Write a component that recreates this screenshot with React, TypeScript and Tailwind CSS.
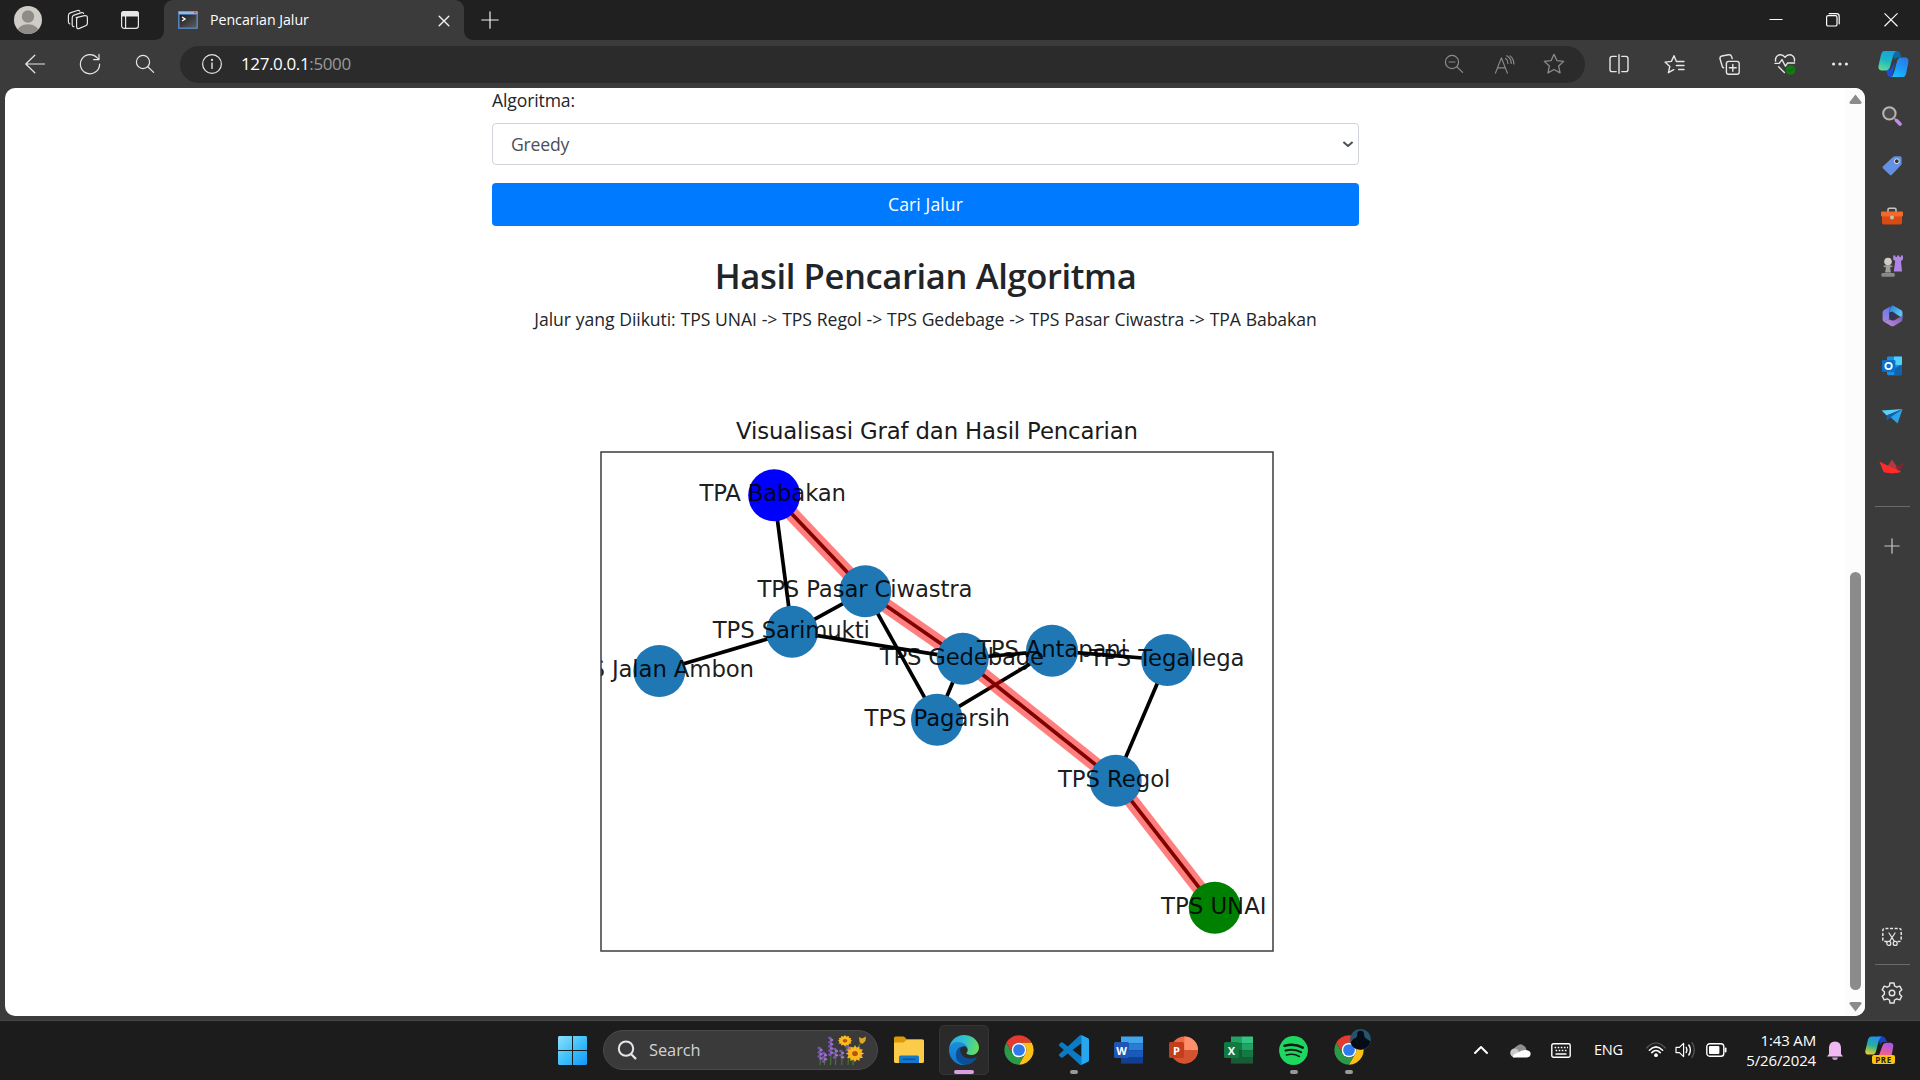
import React from "react";

type SvgProps = {
  w?: number;
  h?: number;
  vb?: string;
  className?: string;
  children: React.ReactNode;
};

/* Line icon: strokes follow the text colour. */
function Line({ w = 20, h, vb = "0 0 20 20", className = "", children }: SvgProps) {
  return (
    <svg
      width={w}
      height={h ?? w}
      viewBox={vb}
      fill="none"
      stroke="currentColor"
      strokeWidth={1.2}
      strokeLinecap="round"
      strokeLinejoin="round"
      className={`block shrink-0 ${className}`}
    >
      {children}
    </svg>
  );
}

/* Coloured artwork. */
function Art({ w = 30, h, vb = "0 0 48 48", className = "", children }: SvgProps) {
  return (
    <svg width={w} height={h ?? w} viewBox={vb} className={`block shrink-0 ${className}`}>
      {children}
    </svg>
  );
}

const starPath =
  "M10 1.2 L12.6 6.9 L18.8 7.6 L14.2 11.9 L15.5 18.1 L10 15 L4.5 18.1 L5.8 11.9 L1.2 7.6 L7.4 6.9 Z";

function TabStrip() {
  return (
    <div className="flex h-[40px] shrink-0 bg-[#202020] text-[#e6e6e6]">
      <div className="flex w-[164px] items-center bg-[#202020]">
        <Art w={28} vb="0 0 28 28" className="ml-[14px]">
          <defs>
            <clipPath id="avatarClip">
              <circle cx="14" cy="14" r="14" />
            </clipPath>
          </defs>
          <g clipPath="url(#avatarClip)">
            <rect width="28" height="28" fill="#cfccc8" />
            <circle cx="14" cy="10.5" r="6.2" fill="#8f8c88" />
            <ellipse cx="14" cy="26" rx="11" ry="7.8" fill="#8f8c88" />
          </g>
        </Art>
        <Line w={22} vb="0 0 22 22" className="ml-[25px]">
          <path d="M9.2 8.6 L17.6 6.6 Q20.4 6.2 20.4 8.8 V14.2 Q20.4 16 18.6 16.8 L12.4 19.4 Q9.8 20.4 9.6 17.6 V10.4 Q9.6 8.8 11 8.2" />
          <path d="M6.9 17.6 Q5.2 17.8 5.2 15.6 V8.8 Q5.2 6.8 7 6.1 L14.5 3.6 Q16 3.2 16.6 4.4" />
          <path d="M2.8 14.8 Q1.4 14.6 1.4 12.8 V6.8 Q1.4 4.6 3.2 3.9 L10.4 1.5 Q12 1.1 12.8 2.2" />
        </Line>
        <Line w={20} className="ml-[31px]">
          <rect x="1.6" y="1.6" width="16.8" height="16.8" rx="2.6" />
          <path d="M1.6 6 V4 Q1.6 1.6 4 1.6 H16 Q18.4 1.6 18.4 4 V6 Z" fill="currentColor" />
          <path d="M5.6 6 V18" />
        </Line>
      </div>
      <div className="relative flex w-[300px] items-center rounded-t-[9px] bg-[#3b3b3b]">
        <div className="absolute bottom-0 left-[-9px] h-[9px] w-[9px] bg-[#3b3b3b]">
          <div className="h-full w-full rounded-br-[9px] bg-[#202020]" />
        </div>
        <div className="absolute right-[-9px] bottom-0 h-[9px] w-[9px] bg-[#3b3b3b]">
          <div className="h-full w-full rounded-bl-[9px] bg-[#202020]" />
        </div>
        <Art w={20} h={18} vb="0 0 20 18" className="ml-[14px]">
          <defs>
            <linearGradient id="term" x1="0" y1="0" x2="1" y2="1">
              <stop offset="0" stopColor="#1d1d1d" />
              <stop offset="1" stopColor="#5c5c5c" />
            </linearGradient>
          </defs>
          <rect width="20" height="18" rx="0.8" fill="#5580b8" />
          <rect x="0.6" y="0.6" width="18.8" height="2.4" fill="#94b9e6" />
          <rect x="16" y="0.9" width="2.4" height="1.6" fill="#d9604c" />
          <rect x="1.6" y="3.8" width="16.8" height="12.6" fill="url(#term)" />
          <path d="M4 6 L7 8 L4 10" fill="none" stroke="#fff" strokeWidth="1.4" />
        </Art>
        <span className="ml-[12px] w-[228px] pb-[1px] font-['Open_Sans','Noto_Sans',sans-serif] text-[14.2px] tracking-[-0.03px] text-white">
          Pencarian Jalur
        </span>
        <Line w={12} vb="0 0 12 12" className="mt-[1px] text-[#f0f0f0]">
          <path d="M1.2 1.2 L10.8 10.8 M10.8 1.2 L1.2 10.8" strokeWidth="1.4" />
        </Line>
      </div>
      <div className="flex grow items-center pl-[17px]">
        <Line w={18} vb="0 0 18 18" className="text-[#f0f0f0]">
          <path d="M9 0.8 V17.2 M0.8 9 H17.2" />
        </Line>
      </div>
      <div className="flex w-[173px] items-center text-white">
        <div className="flex w-[57px] justify-center">
          <Line w={14} vb="0 0 14 14">
            <path d="M0.5 6.5 H13.5" strokeLinecap="butt" strokeWidth="1" />
          </Line>
        </div>
        <div className="flex w-[58px] justify-center">
          <Line w={14} vb="0 0 14 14">
            <rect x="0.6" y="2.6" width="10.4" height="10.4" rx="1.6" />
            <path d="M3.2 0.7 H10.6 Q13.2 0.7 13.2 3.4 V10.8" />
          </Line>
        </div>
        <div className="flex w-[58px] justify-center">
          <Line w={14} vb="0 0 14 14">
            <path d="M0.8 0.6 L13.2 13 M13.2 0.6 L0.8 13" strokeWidth="1.1" />
          </Line>
        </div>
      </div>
    </div>
  );
}

function CopilotMark() {
  return (
    <Art w={31} h={28} vb="0 0 31 28">
      <defs>
        <linearGradient id="cpA" x1="0.6" y1="0" x2="0.3" y2="1">
          <stop offset="0" stopColor="#16a3dd" />
          <stop offset="0.5" stopColor="#1fb6c2" />
          <stop offset="1" stopColor="#5fdc96" />
        </linearGradient>
        <linearGradient id="cpB" x1="0.7" y1="0" x2="0.2" y2="1">
          <stop offset="0" stopColor="#2a7be4" />
          <stop offset="0.6" stopColor="#1ba0fb" />
          <stop offset="1" stopColor="#18c2f4" />
        </linearGradient>
      </defs>
      <path d="M15 1 H19 Q21.4 1 22.4 4 L23.4 7.4 H20 Q17 7.4 16 10 Z" fill="#0f6aa3" />
      <path d="M8 20 H12 L17 12 L14 27 H12.8 Q10 27 9.2 24.4 Z" fill="#1c4fd6" />
      <path d="M6 1 H18.6 Q16.4 1.6 15.4 5 L12 17 Q11 20.4 7.6 20.4 H4 Q-0.4 20.2 0.6 15.6 L3 4.8 Q4 1 6 1Z" fill="url(#cpA)" />
      <path d="M25.2 27 H13 Q15 26.4 16 22.6 L19 11.4 Q20 7.6 23.4 7.6 H27 Q31.2 7.8 30.3 12.4 L28.2 23 Q27.4 27 25.2 27Z" fill="url(#cpB)" />
    </Art>
  );
}

function Toolbar() {
  return (
    <div className="flex h-[48px] shrink-0 items-center bg-[#3b3b3b] text-[#e6e6e6]">
      <div className="flex w-[180px] items-center pb-[1px] pl-[7px]">
        <div className="flex w-[55px] justify-center">
          <Line w={20}>
            <path d="M19.6 10 H0.8 M9.8 1.2 L0.8 10 L9.8 18.8" />
          </Line>
        </div>
        <div className="flex w-[55px] justify-center">
          <Line w={22} vb="0 0 22 22">
            <path d="M20.6 11.2 A9.6 9.6 0 1 1 18 4.6 L19.8 6.4 M20 1.4 V6.6 H14.6" />
          </Line>
        </div>
        <div className="flex w-[55px] justify-center">
          <Line w={20}>
            <circle cx="8" cy="8" r="6.6" />
            <path d="M12.8 12.8 L18.6 18.4" />
          </Line>
        </div>
      </div>
      <div className="flex h-[37px] w-[1405px] items-center rounded-full bg-[#2b2b2b]">
        <Line w={22} vb="0 0 22 22" className="ml-[21px]">
          <circle cx="11" cy="11" r="9.4" />
          <path d="M11 10 V15.4" strokeWidth="1.4" />
          <circle cx="11" cy="6.9" r="0.5" fill="currentColor" />
        </Line>
        <span className="ml-[18px] grow pb-[1px] font-['Open_Sans','Noto_Sans',sans-serif] text-[17px] tracking-[-0.38px] text-[#9a9a9a]">
          <span className="text-white">127.0.0.1</span>:5000
        </span>
        <div className="flex items-center pr-[6px] text-[#8b8b8b]">
          <div className="flex w-[50px] justify-center">
            <Line w={20}>
              <circle cx="8" cy="8" r="6.6" />
              <path d="M12.8 12.8 L18.6 18.4 M5 8 H11" />
            </Line>
          </div>
          <div className="flex w-[50px] justify-center">
            <Line w={21} vb="0 0 21 20">
              <path d="M1.4 18.6 L7.4 3.4 L13.4 18.6 M3.6 13.4 H11.2" />
              <path d="M11.6 4 Q14 5.6 14 9 M12.8 1.2 Q17.4 4 17.2 9 M16 1.4 Q20 4.6 19.8 9.4" />
            </Line>
          </div>
          <div className="flex w-[50px] justify-center">
            <Line w={22} vb="0 0 20 20">
              <path d={starPath} />
            </Line>
          </div>
        </div>
      </div>
      <div className="flex items-center pl-[6px]">
        <div className="flex w-[56px] justify-center">
          <Line w={20}>
            <path d="M7.2 2.4 H3.2 Q1 2.4 1 4.6 V15.4 Q1 17.6 3.2 17.6 H7.2 M12.8 2.4 H16.8 Q19 2.4 19 4.6 V15.4 Q19 17.6 16.8 17.6 H12.8 M10 0.8 V19.2" strokeWidth="1.4" />
          </Line>
        </div>
        <div className="flex w-[55px] justify-center">
          <Line w={21} vb="0 0 21 20">
            <path d="M13.2 7 H12.4 L10 1.2 L7.4 6.9 L1 7.6 L5.8 12 L4.4 18.2 L9.8 15.2 M13.2 7 H20 M12.4 11 H20 M14.6 15 H20" strokeWidth="1.4" />
          </Line>
        </div>
        <div className="flex w-[55px] justify-center">
          <Line w={21} vb="0 0 21 21">
            <rect x="7.4" y="7.4" width="12.8" height="12.8" rx="2.2" strokeWidth="1.4" />
            <path d="M13.8 10.4 V17.2 M10.4 13.8 H17.2" strokeWidth="1.4" />
            <path d="M4.6 13.8 Q3.6 13.6 3.2 12.2 L1 4.8 Q0.6 2.6 2.8 2 L9.6 0.8 Q11.8 0.4 12.6 2.6 L13.2 4.6" strokeWidth="1.4" />
          </Line>
        </div>
        <div className="flex w-[55px] justify-center">
          <Line w={22} vb="0 0 22 22">
            <path d="M1.6 8 Q0.8 4 4.6 2 Q8.4 0.8 11 4.2 Q13.6 0.8 17.4 2 Q21.2 4 20.4 8 M1 10.4 H5.2 L8 6.6 L11.4 13.2 L13.6 10 H20.6 M4.6 13.8 L10.4 19.4" strokeWidth="1.4" />
            <circle cx="16.6" cy="17" r="4.8" fill="#107c10" stroke="none" />
            <path d="M14.6 17 L16 18.4 L18.6 15.6" stroke="#2c4a2c" strokeWidth="1" />
          </Line>
        </div>
        <div className="flex w-[55px] justify-center">
          <Line w={18} vb="0 0 18 4">
            <g fill="currentColor" stroke="none">
              <circle cx="2.6" cy="2" r="1.6" />
              <circle cx="9" cy="2" r="1.6" />
              <circle cx="15.4" cy="2" r="1.6" />
            </g>
          </Line>
        </div>
        <div className="flex w-[53px] justify-center">
          <CopilotMark />
        </div>
      </div>
    </div>
  );
}

type Node = {
  label: string;
  x: number;
  y: number;
  from: number;
  to: number;
  color?: string;
};

const nodes: Record<string, Node> = {
  babakan: { label: "TPA Babakan", x: 774.2, y: 495.3, from: 699.5, to: 846, color: "#0000ff" },
  ciwastra: { label: "TPS Pasar Ciwastra", x: 865.3, y: 591.3, from: 757.5, to: 972.5 },
  sarimukti: { label: "TPS Sarimukti", x: 792, y: 631.7, from: 712.8, to: 869.8 },
  ambon: { label: "TPS Jalan Ambon", x: 659.3, y: 671, from: 563, to: 754 },
  gedebage: { label: "TPS Gedebage", x: 962.7, y: 658.7, from: 879.8, to: 1044 },
  pagarsih: { label: "TPS Pagarsih", x: 937, y: 719.7, from: 864.6, to: 1010 },
  antapani: { label: "TPS Antapani", x: 1052, y: 650.7, from: 977, to: 1127 },
  tegallega: { label: "TPS Tegallega", x: 1167.3, y: 660, from: 1089.5, to: 1244.5 },
  regol: { label: "TPS Regol", x: 1115.7, y: 780.7, from: 1058, to: 1170.4 },
  unai: { label: "TPS UNAI", x: 1214.7, y: 907.7, from: 1161, to: 1266.5, color: "#008000" },
};

const edges = [
  ["babakan", "sarimukti"],
  ["babakan", "ciwastra"],
  ["ciwastra", "sarimukti"],
  ["ciwastra", "pagarsih"],
  ["ciwastra", "gedebage"],
  ["sarimukti", "ambon"],
  ["sarimukti", "gedebage"],
  ["gedebage", "pagarsih"],
  ["gedebage", "antapani"],
  ["gedebage", "regol"],
  ["antapani", "pagarsih"],
  ["antapani", "tegallega"],
  ["tegallega", "regol"],
  ["regol", "unai"],
];

const route = ["babakan", "ciwastra", "gedebage", "regol", "unai"];

function Graph() {
  return (
    <svg width="700" height="560" viewBox="590 405 700 560" className="block font-['DejaVu_Sans',sans-serif] text-[22.8px]">
      <defs>
        <clipPath id="plotArea">
          <rect x="601" y="452" width="672" height="499" />
        </clipPath>
      </defs>
      <text x="736" y="439" textLength="402" fill="#1a1a1a">
        Visualisasi Graf dan Hasil Pencarian
      </text>
      <g stroke="#000" strokeWidth="3.7">
        {edges.map(([a, b]) => (
          <line key={a + b} x1={nodes[a].x} y1={nodes[a].y} x2={nodes[b].x} y2={nodes[b].y} />
        ))}
      </g>
      <g stroke="#ff0000" strokeOpacity="0.5" strokeWidth="14.5">
        {route.slice(1).map((b, i) => {
          const a = route[i];
          return <line key={b} x1={nodes[a].x} y1={nodes[a].y} x2={nodes[b].x} y2={nodes[b].y} />;
        })}
      </g>
      {Object.values(nodes).map((n) => (
        <circle key={n.label} cx={n.x} cy={n.y} r="26" fill={n.color ?? "#1f77b4"} />
      ))}
      <g clipPath="url(#plotArea)" fill="#000" fillOpacity="0.9">
        {Object.values(nodes).map((n) => (
          <text key={n.label} x={n.from} y={n.y + 5.8} textLength={n.to - n.from}>
            {n.label}
          </text>
        ))}
      </g>
      <rect x="601" y="452" width="672" height="499" fill="none" stroke="#3c3c3c" strokeWidth="1.5" />
    </svg>
  );
}

function Page() {
  return (
    <main className="flex h-[928px] w-[1860px] overflow-hidden rounded-[10px] bg-white font-['Open_Sans','Noto_Sans',sans-serif] text-[#212529]">
      <div className="flex grow flex-col items-center">
        <div className="flex w-[867px] flex-col">
          <label className="h-[35px] text-[17.6px] leading-[25px] tracking-[-0.14px]">Algoritma:</label>
          <div className="flex h-[42px] items-center justify-between rounded-[4px] border border-[#ced4da] bg-white pr-[4px] pl-[18px] text-[17.6px] tracking-[-0.2px] text-[#495057]">
            <span>Greedy</span>
            <Line w={12} vb="0 0 12 12">
              <path d="M1.4 4 L6 8 L10.6 4" strokeWidth="2" strokeLinecap="butt" />
            </Line>
          </div>
          <button className="mt-[18px] h-[43px] rounded-[4px] bg-[#007bff] text-[17.6px] tracking-[0.1px] text-white">
            Cari Jalur
          </button>
          <h2 className="mt-[29px] text-center text-[34.6px] leading-[42px] font-semibold tracking-[-0.38px] whitespace-nowrap">
            Hasil Pencarian Algoritma
          </h2>
          <p className="mt-[9px] text-center text-[17.6px] leading-[26px] tracking-[-0.08px] [word-spacing:0.4px] whitespace-nowrap">
            Jalur yang Diikuti: TPS UNAI -&gt; TPS Regol -&gt; TPS Gedebage -&gt; TPS Pasar Ciwastra -&gt; TPA Babakan
          </p>
        </div>
        <div className="mt-[73px] ml-[29px]">
          <Graph />
        </div>
      </div>
      <div className="flex w-[19px] shrink-0 flex-col items-center bg-[#fcfcfc] pt-[6px]">
        <Art w={13} h={11} vb="0 0 13 11">
          <path d="M6.5 0.6 L12.6 8.2 Q12.8 10 11 10 H2 Q0.2 10 0.4 8.2 Z" fill="#8b8b8b" />
        </Art>
        <div className="mt-[467px] h-[418px] w-[11px] rounded-full bg-[#8b8b8b]" />
        <Art w={13} h={11} vb="0 0 13 11" className="mt-[11px]">
          <path d="M6.5 10.4 L12.6 2.8 Q12.8 1 11 1 H2 Q0.2 1 0.4 2.8 Z" fill="#8b8b8b" />
        </Art>
      </div>
    </main>
  );
}

function Cell({ children }: { children: React.ReactNode }) {
  return <div className="flex h-[50px] w-full items-center justify-center">{children}</div>;
}

function Sidebar() {
  return (
    <aside className="flex w-[55px] flex-col items-center bg-[#3b3b3b] pt-[3px] pr-[1px] text-[#e6e6e6]">
      <Cell>
        <Art w={20} vb="0 0 20 20">
          <circle cx="7.4" cy="7.4" r="6.2" fill="#4a4a4a" stroke="#b9b5b1" strokeWidth="2" />
          <path d="M12 12 L14 14" stroke="#8f8b88" strokeWidth="2" />
          <path d="M14.6 14.6 L18 18" stroke="#c48be6" strokeWidth="3.6" strokeLinecap="round" />
        </Art>
      </Cell>
      <Cell>
        <Art w={20} vb="0 0 20 20">
          <path d="M11 1 Q12 0.2 13.4 0.2 H18 Q19.6 0.2 19.6 2 V7.4 Q19.6 8.6 18.6 9.6 L9.6 19 Q8.8 19.8 8 19 L0.8 12.2 Q0 11.4 0.8 10.6 Z" fill="#6390e4" />
          <circle cx="14.8" cy="5.2" r="2.4" fill="#333" stroke="#e3e7ee" strokeWidth="1" />
        </Art>
      </Cell>
      <Cell>
        <Art w={22} h={18} vb="0 0 22 18">
          <path d="M7 5 V2.4 Q7 1.2 8.2 1.2 H13.8 Q15 1.2 15 2.4 V5" fill="none" stroke="#c9c4c0" strokeWidth="1.5" />
          <rect x="1" y="6" width="20" height="11.4" rx="1.4" fill="#d94b10" />
          <rect x="0" y="4.6" width="22" height="5" rx="1" fill="#f2692b" />
          <circle cx="11" cy="10.4" r="2" fill="#c5bfba" />
        </Art>
      </Cell>
      <Cell>
        <Art w={22} vb="0 0 22 22">
          <path d="M12.2 0.4 H14.4 V2 H16 V0.4 H18.4 V2 H20 V0.4 H22 V4.4 L20 6 L21 16.4 H12.8 L14.2 6 L12.2 4.4Z" fill="#b184e8" />
          <circle cx="7" cy="6.6" r="3.8" fill="#cfcbc7" />
          <path d="M2 11 Q7 9 12 11 Q11 12.4 9 12.6 L10 17.4 H4 L5 12.6 Q3 12.4 2 11Z" fill="#a19d9a" />
          <rect x="0.4" y="18" width="13.4" height="3.8" rx="1.4" fill="#8b8784" />
        </Art>
      </Cell>
      <Cell>
        <Art w={21} h={22} vb="0 0 21 22">
          <defs>
            <linearGradient id="mA" x1="0" y1="0" x2="1" y2="0.6">
              <stop offset="0" stopColor="#2b78d8" />
              <stop offset="1" stopColor="#5ccdf5" />
            </linearGradient>
            <linearGradient id="mB" x1="0.5" y1="0" x2="0.3" y2="1">
              <stop offset="0" stopColor="#5b7be8" />
              <stop offset="1" stopColor="#a184e0" />
            </linearGradient>
            <linearGradient id="mC" x1="0" y1="0.6" x2="1" y2="0">
              <stop offset="0" stopColor="#b98bd8" />
              <stop offset="1" stopColor="#7a58c4" />
            </linearGradient>
          </defs>
          <path d="M10.5 0.2 L19.4 5.2 Q20.4 6 20.4 7.4 V13 L13.6 8.8 L7.4 7.4 V4 Z" fill="url(#mA)" />
          <path d="M10.5 0.2 L1.6 5.2 Q0.6 6 0.6 7.4 V14.6 Q0.6 15.8 1.6 16.6 L7.2 14.2 V5.6 Q7.2 2.2 10.5 0.2Z" fill="url(#mB)" />
          <path d="M1.6 16.6 L9 20.9 Q10.5 21.8 12 20.9 L19.4 16.6 Q20.4 15.8 20.4 14.6 V10.6 L13 15 Q10 16.4 7.2 14.2Z" fill="url(#mC)" />
          <path d="M7.4 7.6 L10.5 6.4 L13.8 9 V13.2 L10.5 15 L7.4 13.8Z" fill="#34344c" />
        </Art>
      </Cell>
      <Cell>
        <Art w={20} vb="0 0 20 20">
          <rect x="5" y="0.6" width="15" height="18.6" rx="1.4" fill="#1d8fe0" />
          <rect x="12" y="0.6" width="8" height="8.4" fill="#4fd0f8" />
          <path d="M13 12 L20 8.6 V19.2 H12Z" fill="#1262ab" />
          <rect x="0" y="4" width="13.4" height="12" rx="1.2" fill="#0a70cc" />
          <circle cx="6.6" cy="10" r="3.2" fill="none" stroke="#fff" strokeWidth="1.8" />
        </Art>
      </Cell>
      <Cell>
        <Art w={22} h={17} vb="0 0 22 17">
          <path d="M21.6 1 L0.6 2.6 L5.6 7.6 Z" fill="#59d0f5" />
          <path d="M21.6 1 L5.6 7.6 L5.8 12.4 L10 9.6 Z" fill="#155fa9" />
          <path d="M21.6 1 L9.6 9.2 L16.6 15.6 Z" fill="#2ba3ea" />
        </Art>
      </Cell>
      <Cell>
        <Art w={26} h={15} vb="0 0 26 15">
          <path d="M13 0.4 L20 11 L6 11Z" fill="#b33a3c" />
          <path d="M25.6 2.4 L17 8.4 L20.6 14Z" fill="#7c2733" />
          <path d="M0.4 2.4 L11 7.8 L22 12.6 Q21 14.2 13 14.4 Q5 14.2 4.4 12.6Z" fill="#ff2b2b" />
        </Art>
      </Cell>
      <div className="mt-[15px] h-[1px] w-[35px] bg-[#6a6a6a]" />
      <div className="mt-[31px]">
        <Line w={16} vb="0 0 16 16" className="text-[#c8c8c8]">
          <path d="M8 0.8 V15.2 M0.8 8 H15.2" />
        </Line>
      </div>
      <div className="mt-[373px]">
        <Line w={20}>
          <path d="M5.4 14.4 H3 Q0.8 14.4 0.8 12.2 V3.6 Q0.8 1.4 3 1.4 H17 Q19.2 1.4 19.2 3.6 V12.2 Q19.2 14.4 17 14.4 H14.8" strokeDasharray="3 1.6" strokeLinecap="butt" strokeWidth="1.5" />
          <path d="M7 6 L12.4 14.4 M13 6 L7.6 14.4" />
          <circle cx="6.8" cy="16.4" r="2" />
          <circle cx="13.2" cy="16.4" r="2" />
        </Line>
      </div>
      <div className="mt-[17px] h-[1px] w-[35px] bg-[#6a6a6a]" />
      <div className="mt-[17px]">
        <Line w={22} vb="0 0 22 22">
          <path d="M9 1 H13 L13.6 4 L15.8 5.2 L18.8 4.2 L20.8 7.8 L18.6 9.8 V12.2 L20.8 14.2 L18.8 17.8 L15.8 16.8 L13.6 18 L13 21 H9 L8.4 18 L6.2 16.8 L3.2 17.8 L1.2 14.2 L3.4 12.2 V9.8 L1.2 7.8 L3.2 4.2 L6.2 5.2 L8.4 4 Z" strokeWidth="1.4" />
          <circle cx="11" cy="11" r="2.8" strokeWidth="1.4" />
        </Line>
      </div>
    </aside>
  );
}

function Chrome() {
  return (
    <Art w={32}>
      <path d="M24 13 H43.05 A22 22 0 0 0 4.95 13 L14.47 29.5 A11 11 0 0 1 24 13z" fill="#e33b2e" />
      <path d="M14.47 29.5 L4.95 13 A22 22 0 0 0 24 46 L33.53 29.5 A11 11 0 0 1 14.47 29.5z" fill="#2a9a49" />
      <path d="M33.53 29.5 L24 46 A22 22 0 0 0 43.05 13 H24 A11 11 0 0 1 33.53 29.5z" fill="#fbc116" />
      <circle cx="24" cy="24" r="11" fill="#fff" />
      <circle cx="24" cy="24" r="8.8" fill="#2f7bee" />
    </Art>
  );
}

function Edge() {
  return (
    <Art w={30} vb="0 0 256 256">
      <defs>
        <linearGradient id="edgeGreen" x1="0" y1="0.3" x2="1" y2="0.5">
          <stop offset="0" stopColor="#2aa9dc" />
          <stop offset="0.5" stopColor="#2fc3d0" />
          <stop offset="1" stopColor="#68dd58" />
        </linearGradient>
        <linearGradient id="edgeBlue" x1="0.5" y1="0" x2="0.4" y2="1">
          <stop offset="0" stopColor="#1d8fd8" />
          <stop offset="1" stopColor="#0f7ad0" />
        </linearGradient>
      </defs>
      <path d="M105.7 241.4c-8.9-5.5-16.6-12.8-22.7-21.3-26.3-36-18.4-86.5 17.6-112.8 3.8-2.7 7.7-5.2 11.9-7.2 3.1-1.5 8.4-4.1 15.5-4 10.1.1 19.6 4.9 25.7 13 4 5.4 6.3 11.9 6.4 18.7 0-.2 24.5-79.6-80-79.6-43.9 0-80 41.7-80 78.2-.2 19.3 4 38.5 12.1 56 27.6 58.8 94.8 87.6 156.4 67.1-21.1 6.6-44.1 3.7-62.9-8.1z" fill="url(#edgeBlue)" />
      <path d="M231 190.5c-3.4 1.8-6.9 3.4-10.5 4.7-11.5 4.3-23.6 6.5-35.9 6.5-47.3 0-88.5-32.5-88.5-74.3.1-11.4 6.4-21.9 16.4-27.3-42.8 1.8-53.8 46.4-53.8 72.5 0 73.9 68.1 81.4 82.8 81.4 7.9 0 19.8-2.3 27-4.6l1.3-.4c27.6-9.5 51-28.1 66.6-52.8 1.2-1.9.6-4.3-1.2-5.5-1.3-.8-2.9-.9-4.2-.2z" fill="#0c4f98" />
      <path d="M152.3 148.9c-.9 1-3.3 2.5-3.3 5.7 0 2.6 1.7 5.1 4.7 7.2 14.4 10 41.5 8.7 41.6 8.7 10.7 0 21.1-2.9 30.3-8.3 18.8-11 30.4-31.1 30.4-52.9.3-22.4-8-37.3-11.3-43.9C223.5 23.9 177.7 0 128 0 58 0 1 56.2 0 126.2c.5-36.5 36.8-66 80-66 3.5 0 23.5.3 42 10.1 16.3 8.6 24.9 18.9 30.8 29.2 6.2 10.7 7.3 24.1 7.3 29.5 0 5.3-2.7 13.3-7.8 19.9z" fill="url(#edgeGreen)" />
    </Art>
  );
}

function Badge({ letter, className }: { letter: string; className: string }) {
  return (
    <div
      className={`absolute top-[6px] left-0 flex h-[16px] w-[15px] items-center justify-center rounded-[1.5px] font-['Open_Sans',sans-serif] text-[11px] leading-none font-bold text-white ${className}`}
    >
      {letter}
    </div>
  );
}

function AppSlot({ dot, active, children }: { dot?: boolean; active?: boolean; children: React.ReactNode }) {
  return (
    <div className="flex w-[55px] justify-center">
      <div
        className={
          active
            ? "relative flex h-[50px] w-[50px] items-center justify-center rounded-[5px] border border-[#353535] bg-[#2a2a2a]"
            : "relative flex h-[50px] w-[50px] items-center justify-center"
        }
      >
        {children}
        {dot && <div className="absolute bottom-[1px] left-[21px] h-[4px] w-[8px] rounded-full bg-[#999999]" />}
        {active && <div className="absolute bottom-0 left-[14px] h-[4px] w-[20px] rounded-full bg-[#dba0e2]" />}
      </div>
    </div>
  );
}

function Daisy({ x, y, r, ry, c }: { x: number; y: number; r: number; ry: number; c: string }) {
  return (
    <g transform={`translate(${x} ${y}) scale(1 ${ry})`}>
      <circle r={r * 0.82} fill={c} />
      {[0, 30, 60, 90, 120, 150].map((a) => (
        <ellipse key={a} rx={r} ry={r * 0.17} fill="#fdbd22" transform={`rotate(${a})`} />
      ))}
      <circle r={r * 0.32} fill="#b5570c" />
    </g>
  );
}

function Lavender({ x, y, n }: { x: number; y: number; n: number }) {
  return (
    <g>
      <path d={`M${x + 1} ${y} L${x} 30`} stroke="#4f7a35" strokeWidth="1" />
      {Array.from({ length: n }, (_, i) => (
        <ellipse key={i} cx={x + (i % 2 ? 1 : -0.8)} cy={y + i * 2.1} rx="1.7" ry="1.3" fill={i % 2 ? "#9a74c9" : "#7a55ae"} />
      ))}
    </g>
  );
}

function Taskbar() {
  return (
    <footer className="flex h-[59px] shrink-0 items-center bg-[#1c1c1c] pb-[1px] font-['Open_Sans','Noto_Sans',sans-serif]">
      <div className="flex w-[603px] pt-[1px] pl-[558px]">
        <Art w={29} vb="0 0 29 29">
          <defs>
            <linearGradient id="win" x1="0" y1="0" x2="29" y2="29" gradientUnits="userSpaceOnUse">
              <stop offset="0" stopColor="#8ee0fb" />
              <stop offset="0.5" stopColor="#3fc1fb" />
              <stop offset="1" stopColor="#1496fb" />
            </linearGradient>
          </defs>
          <path d="M1 0 H14 V14 H0 V1Z M15 0 H28 L29 1 V14 H15Z M0 15 H14 V29 H1 L0 28Z M15 15 H29 V28 L28 29 H15Z" fill="url(#win)" />
        </Art>
      </div>
      <div className="flex h-[40px] w-[275px] items-center rounded-full border border-[#4a4a4a] bg-[#3a3a3a] pr-[10px] pl-[13px]">
        <Line w={20} className="text-[#e4e6ea]">
          <circle cx="9" cy="8.6" r="7.2" strokeWidth="2" />
          <path d="M14 14 L18.4 18.4" strokeWidth="2.2" />
        </Line>
        <span className="ml-[12px] grow text-[16.4px] tracking-[-0.05px] text-[#d2d2d2]">Search</span>
        <Art w={50} h={30} vb="0 0 50 30">
          <Lavender x={3} y={13} n={6} />
          <Lavender x={7.4} y={18} n={5} />
          <Lavender x={13.6} y={3} n={9} />
          <Lavender x={18.4} y={14} n={5} />
          <Lavender x={24.6} y={16} n={4} />
          <path d="M36 24 V30 M45 6 L41 12 M28 10 L31 16" stroke="#4f7a35" strokeWidth="1.3" />
          <Lavender x={31} y={11} n={3} />
          <Daisy x={28} y={5.8} r={7.4} ry={0.74} c="#f0a912" />
          <Daisy x={38} y={18.6} r={9} ry={0.92} c="#ee9410" />
          <path d="M42 2 L45 3.4 L49 1.6 L48.4 6 L45.4 9 L42.6 7Z" fill="#e8a522" />
        </Art>
      </div>
      <div className="ml-[3px] flex">
        <AppSlot>
          <Art w={30} h={28} vb="0 0 30 28">
            <path d="M0 2 Q0 0.4 1.6 0.4 H9 Q10.4 0.4 11 1.4 L13 3.6 H28 V8 H0Z" fill="#dd9a04" />
            <path d="M0 6.4 H9.6 L13 3.4 H28.6 Q30 3.4 30 4.8 V25.6 Q30 27 28.6 27 H1.4 Q0 27 0 25.6Z" fill="#fdcb4a" />
            <path d="M5 27 V21 Q5 19.4 6.6 19.4 H23.4 Q25 19.4 25 21 V27Z" fill="#1379cb" />
            <path d="M8.6 23.2 H21.4" stroke="#0a4b8c" strokeWidth="1.2" />
          </Art>
        </AppSlot>
        <AppSlot active>
          <Edge />
        </AppSlot>
        <AppSlot>
          <Chrome />
        </AppSlot>
        <AppSlot dot>
          <Art w={30} vb="0 0 100 100">
            <path d="M96.46 10.8L75.86.87a6.23 6.23 0 0 0-7.1 1.2L29.35 38.04 12.19 25.01a4.16 4.16 0 0 0-5.32.24L1.37 30.26a4.16 4.16 0 0 0 0 6.16L16.25 50 1.37 63.58a4.16 4.16 0 0 0 0 6.16l5.5 5.01a4.16 4.16 0 0 0 5.32.24l17.17-13.03 39.4 35.97a6.22 6.22 0 0 0 7.1 1.2l20.6-9.91A6.25 6.25 0 0 0 100 83.58V16.42a6.25 6.25 0 0 0-3.54-5.62zM75 72.7L45.11 50 75 27.3z" fill="#0b7bc5" />
            <path d="M75 1 L96.5 10.8 Q100 12.6 100 16.4 V83.6 Q100 87.4 96.5 89.2 L75 99z" fill="#27a7f0" />
          </Art>
        </AppSlot>
        <AppSlot>
          <div className="relative h-[28px] w-[29px]">
            <Art w={29} h={28} vb="0 0 29 28">
              <rect x="7" y="0.5" width="22" height="7" fill="#41a5ee" />
              <rect x="7" y="7.4" width="22" height="7" fill="#2b7cd3" />
              <rect x="7" y="14.2" width="22" height="7" fill="#185abd" />
              <rect x="7" y="21" width="22" height="6.6" fill="#103f91" />
            </Art>
            <Badge letter="W" className="bg-[#1d56b5]" />
          </div>
        </AppSlot>
        <AppSlot>
          <div className="relative h-[28px] w-[29px]">
            <Art w={29} h={28} vb="0 0 29 28">
              <circle cx="15.4" cy="14" r="13.6" fill="#ed6c47" />
              <path d="M15.4 0.4 A13.6 13.6 0 0 1 29 14 H15.4Z" fill="#ff8f6b" />
              <path d="M1.8 14 H29 A13.6 13.6 0 0 1 1.8 14Z" fill="#d35230" />
            </Art>
            <Badge letter="P" className="bg-[#c53e1c]" />
          </div>
        </AppSlot>
        <AppSlot>
          <div className="relative h-[28px] w-[29px]">
            <Art w={29} h={28} vb="0 0 29 28">
              <rect x="7" y="0.5" width="11" height="7" fill="#21a366" />
              <rect x="18" y="0.5" width="11" height="7" fill="#33c481" />
              <rect x="7" y="7.4" width="11" height="7" fill="#107c41" />
              <rect x="18" y="7.4" width="11" height="7" fill="#21a366" />
              <rect x="7" y="14.2" width="11" height="7" fill="#185c37" />
              <rect x="18" y="14.2" width="11" height="7" fill="#107c41" />
              <rect x="7" y="21" width="22" height="6.6" fill="#185c37" />
            </Art>
            <Badge letter="X" className="bg-[#117a41]" />
          </div>
        </AppSlot>
        <AppSlot dot>
          <Art w={29} vb="0 0 29 29">
            <circle cx="14.5" cy="14.5" r="14.4" fill="#1ed760" />
            <g fill="none" stroke="#0d1f13" strokeLinecap="round">
              <path d="M5.6 9.8 Q15.4 7 23.8 11.6" strokeWidth="2.5" />
              <path d="M6.6 14.6 Q14.8 12.2 22 16.2" strokeWidth="2.1" />
              <path d="M7.4 19 Q14.4 17 20.4 20.4" strokeWidth="1.7" />
            </g>
          </Art>
        </AppSlot>
        <AppSlot dot>
          <Chrome />
          <Art w={21} vb="0 0 20 20" className="absolute top-[4px] right-[3px]">
            <circle cx="10" cy="10" r="10" fill="#255370" />
            <path d="M10 1.6 Q13.4 1.6 13.4 5.4 Q13.4 8 15.4 9 L19.6 12 A10 10 0 0 1 0.6 13 L3.4 9.4 Q6.8 8.6 6.8 5.4 Q6.8 1.6 10 1.6Z" fill="#060c14" />
          </Art>
        </AppSlot>
      </div>
      <div className="flex grow items-center">
        <Line w={16} vb="0 0 16 16" className="ml-[97px] text-white">
          <path d="M2 11 L8 5 L14 11" strokeWidth="2" />
        </Line>
        <Art w={21} h={15} vb="0 0 21 15" className="ml-[21px]">
          <path d="M3 9 Q3.6 4.6 7 3 Q10 0 13.4 2.4 Q16 3.4 16.6 7 L10 10Z" fill="#8f8f8f" />
          <circle cx="4.6" cy="9.8" r="4.4" fill="#c9c9c9" />
          <path d="M3 14.4 Q2 12 8 9.6 Q12 6.4 16 7 Q20.8 7.6 20.6 11 Q20.4 14.2 17 14.4Z" fill="#fff" />
        </Art>
        <Line w={20} h={15} vb="0 0 20 15" className="ml-[20px] text-white">
          <rect x="0.8" y="0.8" width="18.4" height="13.4" rx="1.6" strokeWidth="1.4" />
          <path d="M3.6 4.4 H17 M4.6 7.4 H16" strokeDasharray="1.6 1.5" strokeWidth="1.5" strokeLinecap="butt" />
          <path d="M5 11 H15" strokeWidth="1.4" />
        </Line>
        <span className="ml-[23px] w-[30px] text-[14.6px] tracking-[-0.3px] text-white">ENG</span>
        <Line w={20} h={16} vb="0 0 20 16" className="ml-[22px] text-white">
          <path d="M0.6 6 Q10 -4 19.4 6" stroke="#5a5a5a" />
          <path d="M3.4 8.2 Q10 1.6 16.6 8.2 M5.8 10.6 Q10 6.4 14.2 10.6" strokeWidth="1.6" />
          <circle cx="10" cy="13.2" r="1.9" fill="currentColor" stroke="none" />
        </Line>
        <Line w={21} h={18} vb="0 0 21 18" className="ml-[9px] text-white">
          <path d="M1 6.4 H4.4 L8.6 2.4 V15.6 L4.4 11.6 H1Z" />
          <path d="M11.2 6.4 Q12.8 9 11.2 11.6 M13.8 4 Q17 9 13.8 14" strokeWidth="1.4" />
          <path d="M17 1.6 Q21.6 9 17 16.4" stroke="#5a5a5a" />
        </Line>
        <Line w={21} h={14} vb="0 0 21 14" className="ml-[10px] text-white">
          <rect x="0.8" y="0.8" width="17" height="12.4" rx="2.8" strokeWidth="1.4" />
          <rect x="3" y="3" width="10.4" height="8" rx="1" fill="currentColor" stroke="none" />
          <path d="M19.6 5.4 V8.6" strokeWidth="1.8" />
        </Line>
        <div className="ml-[13px] flex w-[76px] flex-col items-end text-[15px] leading-[20px] tracking-[-0.15px] whitespace-nowrap text-white">
          <span>1:43 AM</span>
          <span>5/26/2024</span>
        </div>
        <Art w={16} h={19} vb="0 0 16 19" className="ml-[11px]">
          <path d="M2 13 V6.6 Q2.4 0.4 8 0.4 Q13.6 0.4 14 6.6 V13 L16 15.4 H0Z" fill="#f0b9f2" />
          <path d="M5 16.4 H11 Q10.6 19 8 19 Q5.4 19 5 16.4Z" fill="#cf9dd4" />
        </Art>
        <div className="relative ml-[22px] h-[28px] w-[30px]">
          <Art w={29} h={20} vb="0 0 29 20">
            <defs>
              <linearGradient id="preA" x1="0.5" y1="0" x2="0.3" y2="1">
                <stop offset="0" stopColor="#2290ea" />
                <stop offset="0.5" stopColor="#27b09b" />
                <stop offset="1" stopColor="#f3cf1c" />
              </linearGradient>
              <linearGradient id="preB" x1="0.7" y1="0" x2="0.3" y2="1">
                <stop offset="0" stopColor="#a457ef" />
                <stop offset="1" stopColor="#fb6182" />
              </linearGradient>
            </defs>
            <path d="M13 0.4 H18 Q20 0.6 21 3.6 L22 6 H18 Q16 6.4 15 9Z" fill="#173fc4" />
            <path d="M6.6 0.4 H17 Q14.6 1.4 13.4 6 L11 15.4 Q10 18.6 7 18.6 H3.4 Q-0.4 18.4 0.4 14.4 L3 3.6 Q4 0.4 6.6 0.4Z" fill="url(#preA)" />
            <path d="M14 19.6 L17.4 10 Q18.4 6.8 21.6 6.8 H25 Q29 7 28.2 11 L26.6 19.6Z" fill="url(#preB)" />
          </Art>
          <div className="absolute bottom-0 left-[7px] flex h-[9px] w-[23px] items-center justify-center rounded-[2px] bg-[#fcc40c] text-[8px] leading-none font-bold tracking-[0.6px] text-[#1d1a10]">
            PRE
          </div>
        </div>
      </div>
    </footer>
  );
}

export default function App() {
  return (
    <div className="flex h-[1080px] w-[1920px] flex-col overflow-hidden bg-[#3b3b3b]">
      <TabStrip />
      <Toolbar />
      <div className="flex h-[933px] shrink-0 border-b border-[#474747] pl-[5px]">
        <Page />
        <Sidebar />
      </div>
      <Taskbar />
    </div>
  );
}
